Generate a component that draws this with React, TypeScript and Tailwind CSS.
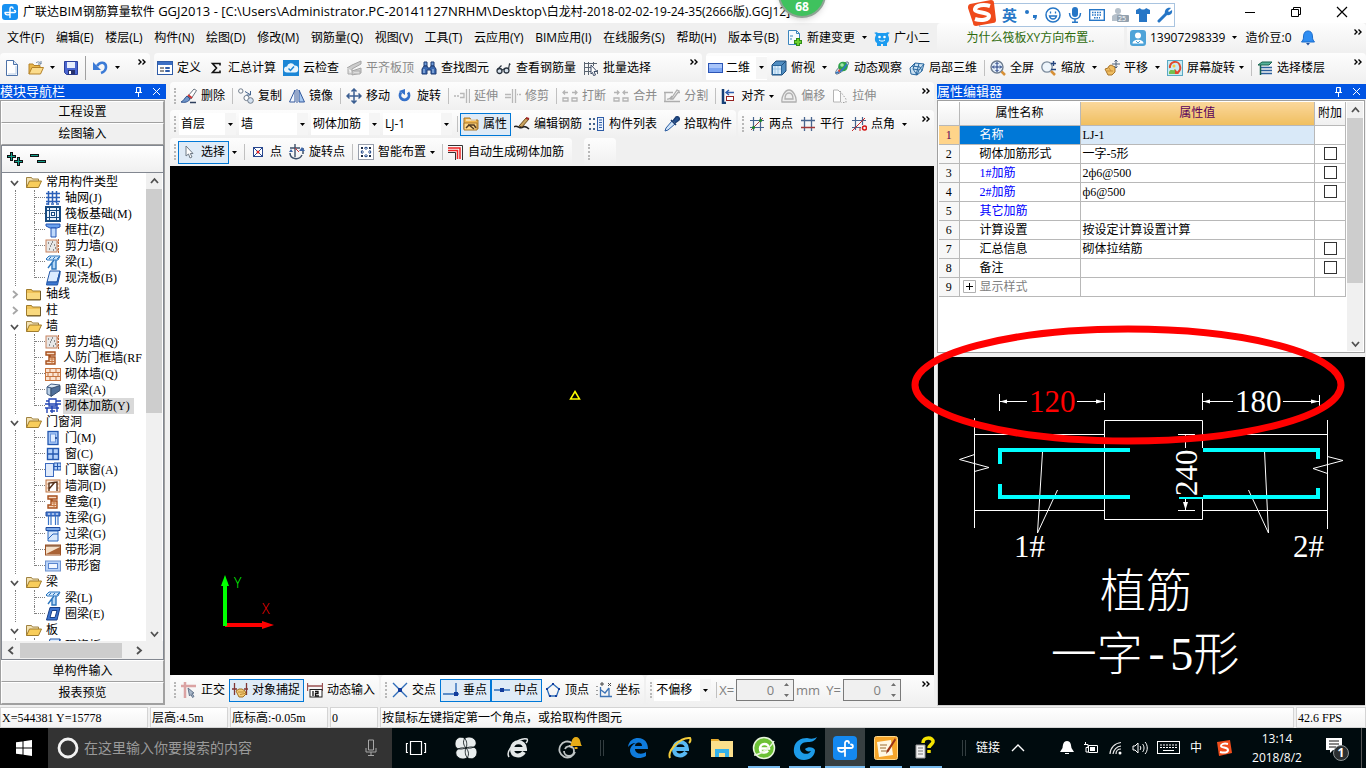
import type { ReactNode } from "react";
import clsx from "clsx";

const art: Record<string, ReactNode> = {
  app: (
    <>
      <rect width="16" height="16" rx="3" fill="#1791f2" />
      <path d="M8 13.5V4.5a1.5 1.5 0 0 1 3 0M3 8.500h9.500c1.500 0 1.500-2 0-2M3 8.500c0 3 5 3 5 1" fill="none" stroke="#fff" strokeWidth="1.4" strokeLinecap="round" />
    </>
  ),
  file: (
    <>
      <path d="M2.5.5h7l4 4v11h-11z" fill="#fff" stroke="#4d72a8" />
      <path d="M9.5.5v4h4" fill="#dbe8f8" stroke="#4d72a8" />
      <path d="M12 6v8H4" fill="none" stroke="#b5cbe6" />
    </>
  ),
  open: (
    <>
      <path d="M1 14V4h4l1 1.500h6V8" fill="#e8b64a" stroke="#b5832a" />
      <path d="M1 14l3-6.500h11.500L12.500 14z" fill="#fbdc8c" stroke="#b5832a" />
      <path d="M8 3c2-2 4-1 5 1m0-3v3h-3" fill="none" stroke="#6c84a0" />
    </>
  ),
  save: (
    <>
      <path d="M1.5 1.500h13v13h-11l-2-2z" fill="#4a66d0" stroke="#2c3f9b" />
      <path d="M4 2h8v6H4z" fill="#e8eefc" />
      <path d="M5 10h7v4.500H5z" fill="#26316e" />
      <path d="M6 11h2v3H6z" fill="#fff" />
    </>
  ),
  undo: (
    <>
      <path d="M5 6c3-5 9-4 9 1 0 3-2 5-5 6" fill="none" stroke="#3c7bd6" strokeWidth="2.6" />
      <path d="M1 2v8h8z" fill="#3c7bd6" />
    </>
  ),
  define: (
    <>
      <rect x=".5" y="1.500" width="15" height="13" fill="#fff" stroke="#2f5ca8" />
      <path d="M1 2h14v3H1z" fill="#3c6fc4" />
      <path d="M3 8h4M3 11h4" stroke="#222" />
      <path d="M8.500 7.500h4v1h-4zM8.500 10.500h4v1h-4z" fill="#fff" stroke="#2f5ca8" />
    </>
  ),
  sigma: <path d="M12 5.500V3.500H4.500L8.500 8l-4 4.500H12v-2" fill="none" stroke="#111" strokeWidth="1.6" />,
  cloud: (
    <>
      <rect width="16" height="16" fill="#1b86d6" />
      <path d="M4 12.500a3 3 0 0 1 0-6 4 4 0 0 1 7.500-1 3.500 3.500 0 0 1 .5 7z" fill="#e9f5fd" />
      <path d="M5.500 8.500l2 2 3.500-4" fill="none" stroke="#1b86d6" strokeWidth="1.500" />
    </>
  ),
  slabTop: (
    <>
      <path d="M1 8l5-3 9-4v3l-9 5v6l9-2V8L6 11" fill="#ccc" stroke="#a4a4a4" />
      <path d="M2 9v5h4M8 11h6v3H8" fill="#ddd" stroke="#aaa" />
    </>
  ),
  find: (
    <>
      <path d="M3 2h3v4H3zM10 2h3v4h-3z" fill="#6d9ad8" stroke="#1d3b72" />
      <path d="M1 14V9l2-3h3l1 2h2l1-2h3l2 3v5h-5v-4H6v4z" fill="#3a68b0" stroke="#1d3b72" />
      <path d="M3 9v4M12 9v4" stroke="#bcd6f6" />
    </>
  ),
  glasses: (
    <>
      <circle cx="3.500" cy="11" r="2.500" fill="#d7e3ee" stroke="#2c3540" strokeWidth="1.3" />
      <circle cx="10.500" cy="10.500" r="2.500" fill="#d7e3ee" stroke="#2c3540" strokeWidth="1.3" />
      <path d="M6 10l2-1M1.500 9.500l4-4M12.500 9l1-5 1 .5" fill="none" stroke="#2c3540" strokeWidth="1.2" />
    </>
  ),
  batch: (
    <>
      <path d="M1.500 2v13M5.500 2v13M1 3.500h13M1 7.500h9M1 11.500h7M10.500 2v4M14.500 10v4" stroke="#5a6470" />
      <path d="M8 5l6 6.500h-3L12.500 15l-2 .5-1-3L8 14z" fill="#fff" stroke="#3c4b66" />
    </>
  ),
  plane: (
    <>
      <rect x=".5" y="3.500" width="14" height="9" fill="#a9c5f9" stroke="#2c55b5" />
      <path d="M1 8h13v4H1z" fill="#7ba4f2" />
    </>
  ),
  cube: (
    <>
      <path d="M1 5l4-4h10v10l-4 4H1z" fill="#4f8cc0" stroke="#1f4d7a" />
      <path d="M1.500 5.500h9v9h-9z" fill="#d9ecfb" stroke="#2a6498" />
      <path d="M4 6v8M7 6v8M2 9h8" stroke="#9cc4e4" />
      <path d="M10.500 5.500L15 1" stroke="#1f4d7a" />
    </>
  ),
  orbit: (
    <>
      <path d="M2 14c-3-2 8-13 12-12 3 2-8 13-12 12z" fill="#d7dfe8" stroke="#5d7186" />
      <circle cx="9" cy="6.500" r="4.800" fill="#2fa34a" />
      <circle cx="8" cy="5" r="1.800" fill="#a5e6a9" />
      <path d="M2 13c4-1 8-4 11-9" fill="none" stroke="#2f78c8" strokeWidth="1.500" />
      <path d="M4 10l3-1-2 4z" fill="#e5482f" />
    </>
  ),
  partial3d: (
    <>
      <path d="M1 8l5-5 9 1-2 7-5 4-6-1z" fill="#cbe1f2" stroke="#2a689f" />
      <path d="M4 9l6 1 5-6M6 3l-2 6 4 6M10 10l-2 5M3 6l8 1 2 4M10 3.500L7 15" fill="none" stroke="#2a689f" />
    </>
  ),
  fullscreen: (
    <>
      <circle cx="7" cy="7" r="6" fill="#e4effa" stroke="#6d7c8f" strokeWidth="1.4" />
      <path d="M7 2.500v9M2.500 7h9M5.500 4L7 2.500 8.500 4M5.500 10L7 11.500 8.500 10M4 5.500L2.500 7 4 8.500M10 5.500L11.500 7 10 8.500" fill="none" stroke="#223f82" />
      <path d="M11.500 11.500L15 15" stroke="#d79036" strokeWidth="2.500" />
    </>
  ),
  zoom: (
    <>
      <circle cx="6" cy="7" r="5.200" fill="#eef5fb" stroke="#7b8a9b" strokeWidth="1.3" />
      <path d="M10 11l4 4" stroke="#d79036" strokeWidth="2.500" />
      <path d="M12.500 1v5M10 3.500h5M10 9.500h5" stroke="#25447e" strokeWidth="1.4" />
    </>
  ),
  pan: (
    <>
      <path d="M1 9l3-1 1-2 2-1 2 1 2 1v5l-3 3H4z" fill="#eebd62" stroke="#a8742a" />
      <path d="M3 11h6M5 8l2 3" stroke="#c88c36" />
      <path d="M12 0v8M8 4h8M10.500 1.500L12 0l1.500 1.500M10.500 6.500L12 8l1.500-1.500" fill="none" stroke="#4b5e78" />
    </>
  ),
  screenRotate: (
    <>
      <rect x=".5" y=".5" width="15" height="15" fill="#c9ebf4" stroke="#5aa9c3" />
      <path d="M3 8a5 5 0 0 1 10-2c1 3 0 5-3 7" fill="none" stroke="#e0492e" strokeWidth="2" />
      <path d="M6 14h6l-4-5z" fill="#e0492e" />
      <path d="M2 12c2-4 4 0 6-3v5H2z" fill="#74bf4d" />
      <circle cx="7" cy="6" r="1.500" fill="#f7c93b" />
    </>
  ),
  floors: (
    <>
      <path d="M1 5l4-3h10l-3 3z" fill="#57b39a" stroke="#17604d" />
      <path d="M4 7.500h11M4 10.500h11M4 13.500h11" stroke="#2c5f9c" strokeWidth="1.4" />
      <path d="M3.500 5v10" stroke="#17604d" strokeWidth="1.500" />
    </>
  ),
  newChange: (
    <>
      <path d="M1.500.5h8l3 3v11h-11z" fill="#f5fbff" stroke="#3b85bd" />
      <path d="M9.500.5v3h3M3 6h3M3 9h2" fill="none" stroke="#3b85bd" />
      <path d="M11 8v8M7 12h8" stroke="#2f8d17" strokeWidth="4" />
      <path d="M11 9v6M8 12h6" stroke="#6cd12f" strokeWidth="2" />
    </>
  ),
  robot: (
    <>
      <path d="M0 3c2-1 3-1 4 0h8c1-1 2-1 4 0-1 0-2 1-2 2 2 4 1 7-1 8v3H9v-2H7v2H3v-3C1 12 0 9 2 5c0-1-1-2-2-2z" fill="#1d9cf0" />
      <circle cx="5.500" cy="7" r="1.300" fill="#fff" />
      <circle cx="10.500" cy="7" r="1.300" fill="#fff" />
      <path d="M5 10c2 1.500 4 1.500 6 0" fill="none" stroke="#fff" />
    </>
  ),
  account: (
    <>
      <rect width="16" height="16" rx="3" fill="#4ea3d8" />
      <circle cx="8" cy="5.500" r="3" fill="#fff" />
      <path d="M2.500 13.500c0-5 11-5 11 0z" fill="#fff" />
      <path d="M6 11l2 2 2-2" fill="none" stroke="#4ea3d8" />
    </>
  ),
  bell: (
    <>
      <path d="M8 1c-3.500 0-4.500 3-4.500 6 0 3-1 3.500-2 5h13c-1-1.500-2-2-2-5 0-3-1-6-4.500-6z" fill="#2f8df2" stroke="#1a6ccc" />
      <path d="M6 13h4L8 15.500z" fill="#1f4f9c" />
    </>
  ),
  erase: (
    <>
      <path d="M0 14c3-1 4-5 6-6l3 3c-1 3-6 4-9 3z" fill="#6f95c9" stroke="#33558f" />
      <path d="M7 8l6-7 2.500 1.500L10 11z" fill="#fff" stroke="#6b7580" />
      <path d="M7 7l4 3" stroke="#c33" strokeWidth="1.800" />
      <path d="M9 14.500h6" stroke="#2d3e5c" strokeWidth="1.500" />
    </>
  ),
  copy: (
    <>
      <circle cx="2.800" cy="3" r="2.200" fill="#fff" stroke="#6f7b8a" />
      <circle cx="8.500" cy="10" r="2.600" fill="#fff" stroke="#6f7b8a" />
      <circle cx="12.500" cy="12.500" r="2.800" fill="#d5e2f0" stroke="#6f7b8a" />
      <path d="M7 3.500l5 3M12.500 3v4h-4" fill="none" stroke="#44648e" />
    </>
  ),
  mirror: (
    <>
      <path d="M6 2v12H.5z" fill="#f3f8ff" stroke="#34599c" />
      <path d="M10 2v12h5.500z" fill="#a6c8f0" stroke="#34599c" />
      <path d="M8 1v14" stroke="#34599c" />
    </>
  ),
  move: <path d="M8 1v14M1 8h14M5.500 3.500L8 1l2.500 2.500M5.500 12.500L8 15l2.500-2.500M3.500 5.500L1 8l2.500 2.500M12.500 5.500L15 8l-2.500 2.500" fill="none" stroke="#3c5f92" strokeWidth="1.500" />,
  rotate: (
    <>
      <path d="M4 4.500a4.500 4.500 0 1 0 7 0" fill="none" stroke="#3470c9" strokeWidth="2.800" />
      <path d="M8 1v6L2 3z" fill="#3470c9" />
    </>
  ),
  extend: <path d="M0 8h2M3 8h2M6 5.500h4v4H6M12.500 1v14M15.500 1v14" fill="none" stroke="#b8b8b8" strokeWidth="1.3" />,
  trim: <path d="M0 6.500h6M7.500 1v14M10.500 1v14M12 6.500h1M14 6.500h2M0 9.500h6" fill="none" stroke="#b8b8b8" strokeWidth="1.3" />,
  breakAt: <path d="M1 4.500h5M10 4.500h5M3 2.500l-2 2 2 2M13 2.500l2 2-2 2M1 10h5v3H1zM10 10h5v3h-5z" fill="none" stroke="#b4b4b4" strokeWidth="1.3" />,
  join: <path d="M1 4.500h5M10 4.500h5M4 2.500l2 2-2 2M12 2.500l-2 2 2 2M1 10h5v3H1zM10 10h5v3h-5z" fill="none" stroke="#b4b4b4" strokeWidth="1.3" />,
  split: <path d="M0 4.500h9M14 4.500h2M0 13.500h16M1 13V5M3 11c3 1 4-2 5-3M7 11l6-9 2 1-6 8z" fill="none" stroke="#adadad" strokeWidth="1.3" />,
  align: (
    <>
      <path d="M2 1v14h3" fill="none" stroke="#153f77" strokeWidth="2.500" />
      <path d="M5 4.500h8M8 2L5 4.500 8 7" fill="none" stroke="#2c5cae" strokeWidth="1.4" />
      <rect x="5.500" y="8.500" width="7" height="4" fill="#fff" stroke="#932020" />
    </>
  ),
  offset: (
    <>
      <path d="M1 14c-1-5 3-12 7-12s8 7 7 12z" fill="#eee" stroke="#b0b0b0" strokeWidth="1.3" />
      <path d="M4 11c0-4 2-6 4-6s4 2 4 6z" fill="none" stroke="#b0b0b0" strokeWidth="1.3" />
    </>
  ),
  stretch: (
    <>
      <path d="M1.500 2v12h7V4.500L6 2z" fill="#fff" stroke="#b4b4b4" />
      <path d="M8 3l6 8v3.500H9" fill="none" stroke="#9f9f9f" strokeDasharray="1.500 1.500" />
    </>
  ),
  property: (
    <>
      <path d="M1 5V2h6l1 2h7v9H1z" fill="#f1b850" stroke="#a7772a" />
      <path d="M1 7h13v7H1z" fill="#ffd887" stroke="#a7772a" />
      <path d="M3 12l3-3 5 4M5 9h6l2 3" fill="none" stroke="#523a21" strokeWidth="1.500" />
      <path d="M3 4h10" stroke="#fff" />
    </>
  ),
  editRebar: (
    <>
      <path d="M0 11c3-3 6 3 9 0 2-1 4 0 6 2" fill="none" stroke="#222" strokeWidth="1.500" />
      <path d="M5 10l7-8 3 1-7 8z" fill="#caa560" stroke="#6d4b1b" />
      <path d="M12 2l3 1" stroke="#a12525" strokeWidth="2" />
    </>
  ),
  list: (
    <>
      <path d="M0 3h2M0 8h2M0 13h2M4 3h2M4 8h2M4 13h2" stroke="#44648e" strokeWidth="1.800" />
      <rect x="8.500" y="1.500" width="6" height="13" fill="#eaf2fc" stroke="#2d5ba6" />
      <path d="M10 4h3M10 6.500h3M10 9h3M10 11.500h3" stroke="#2d5ba6" />
    </>
  ),
  pick: (
    <>
      <path d="M1 15l1-3 6-7 3 3-7 6z" fill="#cfe4fa" stroke="#2a5ca0" />
      <path d="M7 4l5 5M9 5l3-4c2-1 4 1 3 3l-4 3" fill="#24508f" stroke="#1c3e72" strokeWidth="1.500" />
    </>
  ),
  twoPoint: (
    <>
      <path d="M4.500 1v14M11.500 1v14M1 4.500h14M1 11.500h14" stroke="#48658f" strokeWidth="1.2" />
      <path d="M2 14L14 2" stroke="#a13a3a" />
      <circle cx="4.500" cy="11.500" r="1.600" fill="#218a2b" />
      <circle cx="11.500" cy="4.500" r="1.600" fill="#218a2b" />
    </>
  ),
  parallel: (
    <>
      <path d="M4.500 1v14M11.500 1v14M1 4.500h14" stroke="#48658f" strokeWidth="1.3" />
      <path d="M1 11.500h14" stroke="#a13a3a" strokeWidth="1.3" />
    </>
  ),
  pointAngle: (
    <>
      <path d="M4.500 1v13M11.500 1v8M1 4.500h14M1 11.500h9" stroke="#48658f" strokeWidth="1.2" />
      <path d="M1 15L14 2" stroke="#c82a2a" />
      <circle cx="13.500" cy="12" r="2" fill="none" stroke="#d31818" strokeWidth="1.500" />
      <path d="M9 15v-3" stroke="#d31818" />
    </>
  ),
  cursor: <path d="M5 2v10l2.500-2L9 14l2-1-1.700-3.500H12z" fill="#fff" stroke="#6f7a86" />,
  point: (
    <>
      <rect x="3.500" y="3.500" width="9" height="9" fill="#fff" stroke="#27468e" />
      <path d="M4 4l8 8M12 4l-8 8" stroke="#27468e" />
      <circle cx="8" cy="8" r="1.500" fill="#e02222" />
    </>
  ),
  rotatePoint: (
    <>
      <path d="M1 4h10M6 0v13" stroke="#3e5069" strokeWidth="1.4" />
      <path d="M1 9c0 6 9 8 12 2M14 10V4" fill="none" stroke="#3e5069" strokeWidth="1.500" />
      <path d="M10 7h6l-3-4zM0 8h4L2 5z" fill="#3d66a8" />
      <path d="M6 4l4 4" stroke="#ca3434" />
    </>
  ),
  smart: (
    <>
      <rect x=".5" y=".5" width="15" height="15" fill="#fff" stroke="#33415a" strokeDasharray="1 1" />
      <path d="M8 3v3M8 10v3M3 8h3M10 8h3M6 4.500L8 3l2 1.500M6 11.500L8 13l2-1.500M4.500 6L3 8l1.500 2M11.500 6L13 8l-1.500 2" fill="none" stroke="#224a8c" />
      <path d="M3 3h2v2H3zM11 3h2v2h-2zM3 11h2v2H3zM11 11h2v2h-2z" fill="#1c2a42" />
    </>
  ),
  autoRebar: (
    <>
      <path d="M0 1.500h14.500V16M0 8.500h7.500V16" fill="none" stroke="#333" />
      <path d="M0 4h12v11M0 6.500h9.500V15" fill="none" stroke="#e22" strokeWidth="1.500" />
    </>
  ),
  ortho: (
    <>
      <path d="M0 4h15M4 0v16" stroke="#dba3a3" strokeWidth="2.500" />
      <path d="M7 6l6 5-2 .5 2 3-1.500 1L10 12.500 8.500 14z" fill="#a9b7c8" stroke="#64758c" />
    </>
  ),
  snap: (
    <>
      <path d="M2.500 1v12M14.500 1v12M0 7h5M12 7h4" stroke="#803535" strokeWidth="1.3" />
      <path d="M4 9l3-2 3 0 3 2 1 3-3 3H7z" fill="#f3cc78" stroke="#a17125" />
      <path d="M6 10l6 0M8 12.500l5-1" stroke="#be8b35" />
    </>
  ),
  dynInput: (
    <>
      <path d="M0 4h15.500M.5 1v8M15.500 1v8" stroke="#9b5252" strokeWidth="1.3" />
      <rect x="3" y="7.500" width="12" height="7.500" fill="#fff" stroke="#222" />
      <path d="M6 9v5M8 9.500h3v2H8.500V14H12" fill="none" stroke="#111" strokeWidth="1.3" />
    </>
  ),
  cross: (
    <>
      <path d="M1 1l14 14M15 1L1 15" stroke="#2f6db9" strokeWidth="1.4" />
      <path d="M6 6h4v4H6z" fill="#123c9c" />
    </>
  ),
  perp: (
    <>
      <path d="M0 12h16M13 1v12" stroke="#2f6db9" strokeWidth="1.4" />
      <path d="M11 10h4v4h-4z" fill="#123c9c" />
    </>
  ),
  mid: (
    <>
      <path d="M0 8h16" stroke="#2f6db9" strokeWidth="1.4" />
      <path d="M6 6h4v4H6z" fill="#123c9c" />
    </>
  ),
  vertex: (
    <>
      <path d="M8 2l6 5-2.500 7h-7L2 7z" fill="none" stroke="#2f6db9" strokeWidth="1.3" />
      <path d="M7 1h2v2H7zM13 6h2v2h-2zM1 6h2v2H1zM4 13h2v2H4zM10 13h2v2h-2z" fill="#123c9c" />
    </>
  ),
  coord: (
    <>
      <path d="M4.500 5v9.500H16M5 8l4 3 4-5M13 6v8" fill="none" stroke="#3d73b4" strokeWidth="1.3" />
      <path d="M1 4v1M1 8v1M1 12v1M5 1h2v2H5zM12 1l3 3M15 1l-3 3" fill="none" stroke="#444" />
    </>
  ),
  grid: <path d="M3.500 1v14M7.500 1v12M11.500 1v12M1 3.500h14M1 7.500h14M1 11.500h14M1 14h2M6 14h3M11 14h3" fill="none" stroke="#2a5fb8" strokeWidth="1.500" />,
  raft: (
    <>
      <rect x="1" y="1" width="14" height="14" fill="#e9f2fb" stroke="#174a80" strokeWidth="2" />
      <path d="M4.500 1v14M11.500 1v14M1 4.500h14M1 11.500h14" stroke="#174a80" />
      <rect x="6.500" y="6.500" width="3" height="3" fill="#fff" stroke="#174a80" />
    </>
  ),
  column: (
    <>
      <path d="M1 2h14v3l-3 1H5L1 4z" fill="#6aa0ec" stroke="#2355b4" />
      <path d="M6 6h5v9H6z" fill="#bfd9fb" stroke="#2355b4" />
    </>
  ),
  shear: (
    <>
      <rect x="1" y="2" width="11" height="12" fill="#e8e8e8" stroke="#c8825d" />
      <path d="M3 5h1M7 4h1M5 8h1M9 7h1M4 11h1M8 12h1M10 10h1M6 6h1" stroke="#333" />
      <path d="M13.500 1v14M12 4h3M12 8h3M12 12h3" stroke="#b8683c" strokeDasharray="2 1" />
    </>
  ),
  beam: (
    <>
      <path d="M1 5l3-3h11l-2 4H2z" fill="#cfe6fb" stroke="#2b75bd" />
      <path d="M9 6L3 14M11 6v9H7V9" fill="#b5d8f7" stroke="#2b75bd" strokeWidth="1.4" />
      <path d="M4 5l2-2M8 5l2-2M12 5l2-2" stroke="#2b75bd" />
    </>
  ),
  slab: (
    <>
      <path d="M5 1h10l-3 11H2z" fill="#dcecff" stroke="#2458a8" />
      <path d="M2 12h10l3-11v3l-2.500 11H1.500z" fill="#3d78d2" stroke="#2458a8" />
    </>
  ),
  civil: (
    <>
      <path d="M3 2h9v3H7v2h5v7H3v-3h3V5H3z" fill="#f9dcc4" stroke="#a64f1c" strokeWidth="1.4" />
      <path d="M6 9h6M6 11.500h6M9 7v7" stroke="#c5743f" />
    </>
  ),
  brick: (
    <>
      <rect x=".5" y="2.500" width="15" height="12" fill="#fbe4d2" stroke="#c5743f" />
      <path d="M1 6.500h14M1 10.500h14M5 3v3M11 3v3M8 7v3M3 7v3M13 7v3M5 11v3M11 11v3" stroke="#c5743f" />
    </>
  ),
  hidden: (
    <>
      <path d="M2 5l4-3 9 1-4 4z" fill="#dbe8f4" stroke="#425e84" />
      <path d="M2 5l4 1v8l-4-2z" fill="#b9cfe6" stroke="#425e84" />
      <path d="M6 6.500l9-3v5l-9 6z" fill="#4f6f99" stroke="#38506f" />
    </>
  ),
  masonryRebar: (
    <>
      <path d="M4 1h7v7H4z" fill="#fff" stroke="#2345b4" strokeWidth="1.3" />
      <path d="M0 6h16M0 10h14M2 10v5M7 8v7M12 6v8M5 13h5M1 3h3M11 3h5" stroke="#2345b4" strokeWidth="1.4" />
    </>
  ),
  door: (
    <>
      <rect x="3" y="1.500" width="10" height="13" fill="#a9c9f8" stroke="#2458b0" strokeWidth="1.3" />
      <rect x="5.500" y="4" width="5" height="8" fill="#dfecff" stroke="#6c97dd" />
      <path d="M11 7v2" stroke="#173c85" strokeWidth="1.500" />
    </>
  ),
  windowIcon: (
    <>
      <rect x="2.500" y="2.500" width="11" height="11" fill="#b4d2fb" stroke="#2458b0" strokeWidth="1.4" />
      <path d="M8 2v12M2 8h12" stroke="#2458b0" strokeWidth="1.4" />
    </>
  ),
  doorWindow: (
    <>
      <rect x=".5" y="1.500" width="8" height="13" fill="#dfeafb" stroke="#3c6abf" />
      <path d="M9 1h7v7H9zM12.500 1v7M9 4.500h7" fill="#b4d2fb" stroke="#2458b0" />
    </>
  ),
  wallHole: (
    <>
      <rect x="1" y="2" width="14" height="12" fill="#fbe7d6" stroke="#bf7645" />
      <path d="M1 6h14M1 10h14" stroke="#dba27d" />
      <path d="M4 13V5l8-1v9M4 11l6-7" fill="#fff" stroke="#553018" strokeWidth="1.4" />
    </>
  ),
  coupling: (
    <>
      <path d="M1 2h14v4H1z" fill="#4b7fd5" stroke="#1e4a9c" />
      <path d="M3.500 6v9M6 6v9M10.500 6v9M13 6v9" stroke="#3a75c9" strokeWidth="1.2" />
      <path d="M3 4h2M7 4h2M11 4h2" stroke="#fff" />
    </>
  ),
  lintel: (
    <>
      <path d="M1 1.500h14v3H1z" fill="#7ba8e8" stroke="#1e4a9c" />
      <path d="M3 5h10v10H3z" fill="#d8e8fb" stroke="#2b66bd" />
      <path d="M3 13l5-5h5" fill="none" stroke="#2b66bd" />
    </>
  ),
  stripHole: (
    <>
      <rect x=".5" y="3" width="15" height="10" fill="#f5e0c9" stroke="#9a4f21" />
      <path d="M1 12L15 5v7z" fill="#a96235" />
      <path d="M1 4h14" stroke="#693313" />
    </>
  ),
  stripWindow: (
    <>
      <rect x=".5" y="3" width="15" height="10" fill="#b9d3f8" stroke="#6f93cf" />
      <rect x="3.500" y="5.500" width="9" height="5" fill="#f0f6ff" stroke="#5a86cf" />
    </>
  ),
  ringBeam: (
    <>
      <path d="M5 1.500h10L12 14H1.500z" fill="#3b73cf" stroke="#173f87" />
      <path d="M7 4.500h5l-2 7H5z" fill="#fff" stroke="#173f87" />
    </>
  ),
  folder: (
    <>
      <path d="M.5 13.500v-10h5l1 1.500h8v8.500z" fill="#efc259" stroke="#a07c2d" />
      <path d="M1 7h13v6H1z" fill="#f9d97e" />
      <path d="M14.500 5v9H1" fill="none" stroke="#6f5a2a" />
    </>
  ),
  folderOpen: (
    <>
      <path d="M.5 13.500v-10h5l1 1.500h6V8" fill="#f3e2b3" stroke="#a08241" />
      <path d="M.5 13.500l3-6.500h12l-3 6.500z" fill="#f8cd5b" stroke="#a07c2d" />
    </>
  ),
};

function Icon({ name }: { name: string }) {
  return (
    <svg width="16" height="16" viewBox="0 0 16 16" className="shrink-0" aria-hidden="true">
      {art[name]}
    </svg>
  );
}

function Caret() {
  return (
    <svg width="5" height="3" viewBox="0 0 5 3" className="shrink-0" aria-hidden="true">
      <path d="M0 0h5L2.500 3z" fill="#000" />
    </svg>
  );
}

function CaretButton({ label }: { label: string }) {
  return (
    <button aria-label={label} className="mr-1 flex h-5 items-center pl-[3px]">
      <Caret />
    </button>
  );
}

function More() {
  return (
    <button aria-label="更多" className="mt-[6px] mr-1 ml-auto self-start">
      <svg width="8" height="6" viewBox="0 0 8 6" aria-hidden="true">
        <path d="M.5.5L3 3 .5 5.500M4.500.5L7 3 4.500 5.500" fill="none" stroke="#000" strokeWidth="1.4" />
      </svg>
    </button>
  );
}

function Grip() {
  return <span className="mr-[2px] ml-1 h-4 shrink-0 border-l-2 border-dotted border-[#b8b8b8]" />;
}

function Sep() {
  return <span className="mr-[2px] ml-[3px] h-4 w-px shrink-0 bg-[#c0c0c0]" />;
}

type ToolProps = { icon: string; label: string; active?: boolean; disabled?: boolean; caret?: boolean };

function Tool({ icon, label, active, disabled, caret }: ToolProps) {
  return (
    <button
      disabled={disabled}
      className={clsx(
        "flex h-[23px] shrink-0 items-center gap-1 border pr-[3px] pl-[2px] whitespace-nowrap",
        active ? "border-[#0078d7] bg-[#dfebf7]" : "border-transparent",
        disabled && "text-[#8a8a8a]",
      )}
    >
      <Icon name={icon} />
      {label}
      {caret && <Caret />}
    </button>
  );
}

function Bar({ children, className }: { children: ReactNode; className?: string }) {
  return (
    <div className={clsx("flex min-w-0 items-center overflow-hidden rounded-sm bg-gradient-to-b from-[#fdfdfd] to-[#f0f0f0]", className)}>
      {children}
    </div>
  );
}

function Combo({ label, value, className }: { label: string; value: string; className: string }) {
  return (
    <span className={clsx("relative flex h-[22px] shrink-0 items-center bg-white", className)}>
      <select aria-label={label} className="h-full w-full appearance-none pl-[2px] outline-none">
        <option>{value}</option>
      </select>
      <span className="pointer-events-none absolute inset-y-0 right-0 flex w-[11px] items-center justify-center bg-[#f5f5f5]">
        <Caret />
      </span>
    </span>
  );
}

const menus = [
  "文件(F)", "编辑(E)", "楼层(L)", "构件(N)", "绘图(D)", "修改(M)", "钢筋量(Q)",
  "视图(V)", "工具(T)", "云应用(Y)", "BIM应用(I)", "在线服务(S)", "帮助(H)", "版本号(B)",
];

function TitleBar() {
  return (
    <header className="relative flex h-[23px] shrink-0 items-center bg-white pl-[2px]">
      <Icon name="app" />
      <h1 className="ml-[5px] text-[13px] whitespace-nowrap">
        <span className="text-[12px]">广联达</span>BIM<span className="text-[12px]">钢筋算量软件</span>
        {" GGJ2013 - [C:\\Users\\Administrator.PC-20141127NRHM\\Desktop\\"}
        <span className="text-[12px]">白龙村-2018-02-02-19-24-35(2666版).GGJ12]</span>
      </h1>
      <div className="absolute top-[-30px] left-[778px] flex h-12 w-12 items-end justify-center rounded-full border-2 border-[#8fa495] bg-[#3fc25e] pb-[1px] text-[12px] font-bold text-white shadow-md">
        68
      </div>
      <div className="mr-[18px] ml-auto flex items-center gap-[34px]">
        <button aria-label="最小化">
          <svg width="12" height="12" viewBox="0 0 12 12"><path d="M1 6.500h10" stroke="#000" /></svg>
        </button>
        <button aria-label="还原">
          <svg width="12" height="12" viewBox="0 0 12 12"><path d="M1.500 3.500h7v7h-7zM3.500 3v-1.500h7v7H9" fill="none" stroke="#000" /></svg>
        </button>
        <button aria-label="关闭">
          <svg width="12" height="12" viewBox="0 0 12 12"><path d="M1 1l10 10M11 1L1 11" stroke="#000" strokeWidth="1.2" /></svg>
        </button>
      </div>
      <ImeBar />
    </header>
  );
}

function ImeBar() {
  return (
    <div className="absolute top-[3px] right-[191px] z-20 flex h-6 w-[196px] items-center gap-[6px] border border-[#a9c4e0] bg-white pl-[22px] text-[#2676c6]">
      <svg width="29" height="29" viewBox="0 0 29 29" className="absolute -top-[5px] -left-[12px]">
        <path d="M2 5L23 1c2 0 3 1 3 3l2 17c0 2-1 3-3 3L8 27c-2 0-3-1-3-3L0 9c0-2 0-3 2-4z" fill="#ef4a1b" />
        <path d="M22 7c-6-2-14-1-15 3s14 3 14 7-8 5-14 3" fill="none" stroke="#fff" strokeWidth="4" />
      </svg>
      <span className="text-[15px] font-bold">英</span>
      <svg width="16" height="16" viewBox="0 0 16 16"><circle cx="4" cy="5" r="2" fill="#2676c6" /><path d="M10 8h4c0 3-1 5-3 5l1-2h-2z" fill="#2676c6" /></svg>
      <svg width="16" height="16" viewBox="0 0 16 16"><circle cx="8" cy="8" r="7" fill="none" stroke="#2676c6" strokeWidth="1.500" /><path d="M5.500 4.500v2M10.500 4.500v2M4.500 9c1 4 6 4 7 0z" fill="none" stroke="#2676c6" strokeWidth="1.3" /></svg>
      <svg width="16" height="16" viewBox="0 0 16 16"><rect x="5" y="0" width="6" height="10" rx="3" fill="#2676c6" /><path d="M2.500 6c0 8 11 8 11 0M8 12v3M5 15.300h6" fill="none" stroke="#2676c6" strokeWidth="1.500" /></svg>
      <svg width="16" height="16" viewBox="0 0 16 16"><rect x=".7" y="2.700" width="14.600" height="10.600" fill="none" stroke="#2676c6" strokeWidth="1.4" /><path d="M3 5.500h10M3 8h10M5 10.800h6" stroke="#2676c6" strokeWidth="1.4" strokeDasharray="1.500 1" /></svg>
      <svg width="18" height="16" viewBox="0 0 18 16"><circle cx="7" cy="4" r="3" fill="#b5c0ca" /><path d="M1 14V9c3-3 9-3 11 0v5z" fill="#b5c0ca" /><rect x="6" y="8" width="12" height="7" rx="1" fill="#93a1ae" /><text x="7" y="14" fontSize="7" fill="#fff">25</text></svg>
      <svg width="16" height="16" viewBox="0 0 16 16"><path d="M1 3l4-2c1 2 5 2 6 0l4 2v4h-3v8H4V7H1z" fill="#2676c6" /></svg>
      <svg width="16" height="16" viewBox="0 0 16 16"><path d="M2 14L9 7" stroke="#2676c6" strokeWidth="3" strokeLinecap="round" /><path d="M8 7c-1-4 2-7 6-6l-3 3 1 1 3-2c1 4-3 7-7 4z" fill="#2676c6" /></svg>
    </div>
  );
}

function MenuRow() {
  return (
    <div className="flex h-[29px] shrink-0 items-center">
      <nav className="flex min-w-0 flex-1 items-center overflow-hidden pl-[7px] whitespace-nowrap">
        <div className="mr-[5px] flex w-[772px] shrink-0 justify-between">
          {menus.map((m) => (
            <button key={m}>{m}</button>
          ))}
        </div>
        <Tool icon="newChange" label="新建变更" />
        <CaretButton label="新建变更选项" />
        <Tool icon="robot" label="广小二" />
      </nav>
      <div className="flex h-full w-[429px] shrink-0 gap-[3px]">
        <Bar className="w-[187px] justify-center">
          <a href="#help" className="text-[#2e6b0c]">为什么筏板XY方向布置..</a>
        </Bar>
        <Bar className="flex-1">
          <Tool icon="account" label="13907298339" />
          <CaretButton label="账号" />
          <span className="mr-2 ml-1">造价豆:0</span>
          <button aria-label="通知"><Icon name="bell" /></button>
          <More />
        </Bar>
      </div>
    </div>
  );
}

function MainToolbar() {
  return (
    <div className="flex h-[30px] shrink-0 gap-1 pt-px">
      <Bar className="w-[150px] shrink-0 pl-1">
        <button aria-label="新建"><Icon name="file" /></button>
        <button aria-label="打开" className="ml-2"><Icon name="open" /></button>
        <span className="mr-1 ml-[3px]"><CaretButton label="打开选项" /></span>
        <button aria-label="保存"><Icon name="save" /></button>
        <span className="mx-[6px] h-6 w-px bg-[#a0a0a0]" />
        <button aria-label="撤销"><Icon name="undo" /></button>
        <span className="ml-1"><CaretButton label="撤销选项" /></span>
        <More />
      </Bar>
      <Bar className="w-[548px] shrink-0">
        <Tool icon="define" label="定义" />
        <Tool icon="sigma" label="汇总计算" />
        <Tool icon="cloud" label="云检查" />
        <Tool icon="slabTop" label="平齐板顶" disabled />
        <Tool icon="find" label="查找图元" />
        <Tool icon="glasses" label="查看钢筋量" />
        <Tool icon="batch" label="批量选择" />
        <More />
      </Bar>
      <Bar className="flex-1">
        <span className="mr-px flex h-6 items-center bg-white pl-[2px]">
          <Icon name="plane" />
          <Combo label="视图维度" value="二维" className="w-[43px]" />
        </span>
        <Tool icon="cube" label="俯视" />
        <CaretButton label="俯视选项" />
        <Tool icon="orbit" label="动态观察" />
        <Tool icon="partial3d" label="局部三维" />
        <Sep />
        <Tool icon="fullscreen" label="全屏" />
        <Tool icon="zoom" label="缩放" />
        <CaretButton label="缩放选项" />
        <Tool icon="pan" label="平移" />
        <CaretButton label="平移选项" />
        <Tool icon="screenRotate" label="屏幕旋转" caret />
        <Sep />
        <Tool icon="floors" label="选择楼层" />
        <More />
      </Bar>
    </div>
  );
}

function PanelTitle({ children }: { children: string }) {
  return (
    <div className="flex h-[15px] shrink-0 items-center bg-[#0054e3] text-[13px] leading-[15px] text-white">
      <h2>{children}</h2>
      <button aria-label="固定" className="ml-auto">
        <svg width="9" height="10" viewBox="0 0 9 10"><path d="M2.500.5h4v5h-4zM1 5.500h7M4.500 6v4M6 1v4" fill="none" stroke="#fff" /></svg>
      </button>
      <button aria-label="关闭面板" className="mx-[5px] pl-1">
        <svg width="9" height="9" viewBox="0 0 9 9"><path d="M1 1l7 7M8 1L1 8" stroke="#fff" /></svg>
      </button>
    </div>
  );
}

type Group = { name: string; open: boolean; items: [string, string][] };

const tree: Group[] = [
  {
    name: "常用构件类型",
    open: true,
    items: [["grid", "轴网(J)"], ["raft", "筏板基础(M)"], ["column", "框柱(Z)"], ["shear", "剪力墙(Q)"], ["beam", "梁(L)"], ["slab", "现浇板(B)"]],
  },
  { name: "轴线", open: false, items: [] },
  { name: "柱", open: false, items: [] },
  {
    name: "墙",
    open: true,
    items: [["shear", "剪力墙(Q)"], ["civil", "人防门框墙(RF"], ["brick", "砌体墙(Q)"], ["hidden", "暗梁(A)"], ["masonryRebar", "砌体加筋(Y)"]],
  },
  {
    name: "门窗洞",
    open: true,
    items: [
      ["door", "门(M)"], ["windowIcon", "窗(C)"], ["doorWindow", "门联窗(A)"], ["wallHole", "墙洞(D)"], ["civil", "壁龛(I)"],
      ["coupling", "连梁(G)"], ["lintel", "过梁(G)"], ["stripHole", "带形洞"], ["stripWindow", "带形窗"],
    ],
  },
  { name: "梁", open: true, items: [["beam", "梁(L)"], ["ringBeam", "圈梁(E)"]] },
  { name: "板", open: true, items: [["slab", "现浇板(B)"]] },
];

function Arrow({ dir, muted }: { dir: "up" | "down" | "left" | "right"; muted?: boolean }) {
  const d = { up: "M1 6l3.500-4L8 6", down: "M1 3l3.500 4L8 3", left: "M6 1L2 4.500 6 8", right: "M3 1l4 3.500L3 8" }[dir];
  return (
    <svg width="9" height="9" viewBox="0 0 9 9" className="shrink-0" aria-hidden="true">
      <path d={d} fill="none" stroke={muted ? "#a6a6a6" : "#505050"} strokeWidth="1.800" />
    </svg>
  );
}

function VScroll({ thumb }: { thumb: string }) {
  return (
    <div className="flex w-4 shrink-0 flex-col items-center bg-[#f0f0f0]">
      <button aria-label="向上滚动" className="flex h-4 shrink-0 items-center"><Arrow dir="up" /></button>
      <div className="w-full flex-1">
        <div className={clsx("bg-[#cdcdcd]", thumb)} />
      </div>
      <button aria-label="向下滚动" className="flex h-4 shrink-0 items-center"><Arrow dir="down" /></button>
    </div>
  );
}

function ComponentTree() {
  return (
    <ul className="min-w-0 flex-1 overflow-hidden pt-px leading-4 whitespace-nowrap">
      {tree.map((g) => (
        <li key={g.name}>
          <button className="flex h-4 items-center">
            <span className="flex w-6 justify-center"><Arrow dir={g.open ? "down" : "right"} muted={!g.open} /></span>
            <Icon name={g.open ? "folderOpen" : "folder"} />
            <span className="pl-1">{g.name}</span>
          </button>
          {g.open && (
            <ul className="ml-[13px] border-l border-dotted border-[#808080] pl-[18px]">
              {g.items.map(([icon, label], i) => (
                <li key={label} className="flex h-4">
                  <span className={clsx("border-l border-dotted border-[#808080]", i === g.items.length - 1 ? "h-2" : "h-4")} />
                  <span className="h-2 w-[10px] border-b border-dotted border-[#808080]" />
                  <button className="flex items-center gap-[2px]">
                    <Icon name={icon} />
                    <span className={clsx("pr-1 pl-[2px]", label === "砌体加筋(Y)" && "bg-[#d9d9d9]")}>{label}</span>
                  </button>
                </li>
              ))}
            </ul>
          )}
        </li>
      ))}
    </ul>
  );
}

function NavButton({ children }: { children: string }) {
  return (
    <button className="h-[22px] shrink-0 border border-t-white border-r-[#a0a0a0] border-b-[#a0a0a0] border-l-white bg-[#f0f0f0]">
      {children}
    </button>
  );
}

function Navigator() {
  return (
    <aside className="flex w-[166px] shrink-0 flex-col pt-[2px] font-['Liberation_Serif','Noto_Sans_CJK_SC',serif]">
      <PanelTitle>模块导航栏</PanelTitle>
      <div className="mt-px mr-px mb-[2px] flex min-h-0 flex-1 flex-col border border-[#a0a0a0]">
        <NavButton>工程设置</NavButton>
        <NavButton>绘图输入</NavButton>
        <div className="flex min-h-0 flex-1 flex-col border border-[#828790] bg-white">
          <div className="flex h-[27px] shrink-0 items-center gap-[6px] border-b border-[#828790] bg-gradient-to-b from-white to-[#f0f0f0] pl-[5px]">
            <button aria-label="全部展开">
              <svg width="17" height="16" viewBox="0 0 17 16"><path d="M4.500 1v9M0 5.500h9M11.500 6v9M7 10.500h9" stroke="#111" strokeWidth="3" /><path d="M4.500 2v7M1 5.500h7M11.500 7v7M8 10.500h7" stroke="#12a08c" /></svg>
            </button>
            <button aria-label="全部折叠">
              <svg width="17" height="16" viewBox="0 0 17 16"><path d="M0 4.500h9M7 10.500h9" stroke="#111" strokeWidth="3" /><path d="M1 4.500h7M8 10.500h7" stroke="#12a08c" /></svg>
            </button>
          </div>
          <div className="flex min-h-0 flex-1 pr-px">
            <ComponentTree />
            <VScroll thumb="h-[224px]" />
          </div>
          <div className="flex h-[18px] shrink-0 items-center bg-[#f0f0f0] pr-4">
            <button aria-label="向左滚动" className="flex w-[18px] justify-center"><Arrow dir="left" /></button>
            <div className="flex h-[15px] flex-1"><div className="w-[102px] bg-[#cdcdcd]" /></div>
            <button aria-label="向右滚动" className="flex w-[18px] justify-center"><Arrow dir="right" /></button>
          </div>
        </div>
        <NavButton>单构件输入</NavButton>
        <NavButton>报表预览</NavButton>
      </div>
    </aside>
  );
}

function OffsetField({ id, label }: { id: string; label: string }) {
  return (
    <>
      <label htmlFor={id} className="text-[13px] text-[#808080]">{label}</label>
      <span className="ml-[2px] flex h-[22px] w-[58px] shrink-0 items-center border border-[#7a7a7a] bg-[#f0f0f0] pr-[3px] text-[#808080]">
        <input id={id} defaultValue="0" className="w-0 flex-1 pr-[9px] text-right text-[13px] outline-none" />
        <svg width="7" height="18" viewBox="0 0 7 18"><path d="M1 5h5L3.500 2zM1 13h5l-2.500 3z" fill="#707070" /></svg>
      </span>
    </>
  );
}

function Workspace() {
  return (
    <main className="flex min-w-0 flex-1 flex-col">
      <Bar className="h-7 shrink-0">
        <Grip />
        <Tool icon="erase" label="删除" />
        <Sep />
        <Tool icon="copy" label="复制" />
        <Tool icon="mirror" label="镜像" />
        <Sep />
        <Tool icon="move" label="移动" />
        <Tool icon="rotate" label="旋转" />
        <Sep />
        <Tool icon="extend" label="延伸" disabled />
        <Tool icon="trim" label="修剪" disabled />
        <Sep />
        <Tool icon="breakAt" label="打断" disabled />
        <Tool icon="join" label="合并" disabled />
        <Tool icon="split" label="分割" disabled />
        <Sep />
        <Tool icon="align" label="对齐" caret />
        <Tool icon="offset" label="偏移" disabled />
        <Tool icon="stretch" label="拉伸" disabled />
        <More />
      </Bar>
      <div className="flex h-7 shrink-0 gap-[2px]">
        <Bar>
          <Grip />
          <span className="flex items-center gap-[3px] pr-[2px] pl-px">
            <Combo label="楼层" value="首层" className="w-[57px]" />
            <Combo label="构件类别" value="墙" className="w-[69px]" />
            <Combo label="构件类型" value="砌体加筋" className="w-[69px]" />
            <Combo label="构件" value="LJ-1" className="w-[69px]" />
          </span>
          <Sep />
          <Tool icon="property" label="属性" active />
          <Tool icon="editRebar" label="编辑钢筋" />
          <Tool icon="list" label="构件列表" />
          <Tool icon="pick" label="拾取构件" />
        </Bar>
        <Bar className="flex-1">
          <Grip />
          <Tool icon="twoPoint" label="两点" />
          <Tool icon="parallel" label="平行" />
          <Tool icon="pointAngle" label="点角" />
          <CaretButton label="点角选项" />
          <More />
        </Bar>
      </div>
      <div className="flex h-7 shrink-0">
        <Bar className="pr-1">
          <Grip />
          <Tool icon="cursor" label="选择" active />
          <CaretButton label="选择选项" />
          <Sep />
          <Tool icon="point" label="点" />
          <Tool icon="rotatePoint" label="旋转点" />
          <Sep />
          <Tool icon="smart" label="智能布置" caret />
          <Sep />
          <Tool icon="autoRebar" label="自动生成砌体加筋" />
        </Bar>
        <Bar className="ml-3 w-8"><Grip /></Bar>
      </div>
      <div className="relative min-h-0 flex-1 bg-black">
        <svg width="12" height="11" viewBox="0 0 12 11" className="absolute top-[44%] left-[53%] -translate-x-1/2">
          <path d="M6 1.500L10.500 9h-9z" fill="none" stroke="#ff0" strokeWidth="1.500" />
        </svg>
        <svg width="64" height="62" viewBox="0 0 64 62" className="absolute bottom-[43px] left-[45px] font-['Open_Sans',sans-serif] font-light">
          <path d="M10 55h42" stroke="#f00" strokeWidth="4" />
          <path d="M47 51l12 4-12 4z" fill="#f00" />
          <path d="M10 56V14" stroke="#0f0" strokeWidth="4" />
          <path d="M6 16l4-11 4 11z" fill="#0f0" />
          <text x="19" y="18" fontSize="14" fill="#0f0">Y</text>
          <text x="47" y="44" fontSize="14" fill="#f00">X</text>
        </svg>
      </div>
      <div className="mb-[2px] flex h-[30px] shrink-0 gap-[2px]">
        <Bar>
          <Grip />
          <Tool icon="ortho" label="正交" />
          <Tool icon="snap" label="对象捕捉" active />
          <Tool icon="dynInput" label="动态输入" />
        </Bar>
        <Bar>
          <Grip />
          <Tool icon="cross" label="交点" />
          <Tool icon="perp" label="垂点" active />
          <Tool icon="mid" label="中点" active />
          <Tool icon="vertex" label="顶点" />
          <Tool icon="coord" label="坐标" />
        </Bar>
        <Bar className="flex-1">
          <Grip />
          <Combo label="偏移方式" value="不偏移" className="w-[57px]" />
          <span className="w-[2px]" />
          <Sep />
          <OffsetField id="offset-x" label="X=" />
          <span className="mx-[2px] text-[13px] text-[#808080]">mm</span>
          <span className="w-1" />
          <OffsetField id="offset-y" label="Y=" />
          <More />
        </Bar>
      </div>
    </main>
  );
}

type Prop = { name: string; value: string; extra?: boolean; tone?: string };

const props: Prop[] = [
  { name: "名称", value: "LJ-1" },
  { name: "砌体加筋形式", value: "一字-5形", extra: true },
  { name: "1#加筋", value: "2ф6@500", extra: true, tone: "text-[#0000ff]" },
  { name: "2#加筋", value: "ф6@500", extra: true, tone: "text-[#0000ff]" },
  { name: "其它加筋", value: "", tone: "text-[#0000ff]" },
  { name: "计算设置", value: "按设定计算设置计算" },
  { name: "汇总信息", value: "砌体拉结筋", extra: true },
  { name: "备注", value: "", extra: true },
  { name: "显示样式", value: "", tone: "text-[#808080]" },
];

function PropertyTable() {
  return (
    <table className="w-full table-fixed border-collapse self-start">
      <colgroup>
        <col className="w-5" />
        <col className="w-[121px]" />
        <col />
        <col className="w-[31px]" />
      </colgroup>
      <thead>
        <tr className="h-[23px] bg-gradient-to-b from-white to-[#f0f0f0]">
          <th className="border-r border-b border-[#b8b8b8]" />
          <th className="border-r border-b border-[#b8b8b8] font-normal">属性名称</th>
          <th className="border-r border-b border-[#b8b8b8] bg-gradient-to-b from-[#fad79b] to-[#f0bf5e] font-normal text-[#5a005a]">属性值</th>
          <th className="border-r border-b border-[#b8b8b8] font-normal whitespace-nowrap">附加</th>
        </tr>
      </thead>
      <tbody>
        {props.map((p, i) => (
          <tr key={p.name} className="h-[19px]">
            <th className={clsx("border-r border-b border-[#b8b8b8] p-0 font-normal", i === 0 ? "bg-[#ffd48a] text-[#5a005a]" : "bg-[#f7f7f7]")}>{i + 1}</th>
            <td className={clsx("relative border-r border-b border-[#b8b8b8] p-0 pl-5", p.tone, i === 0 && "bg-[#0078d7] text-white")}>
              {p.name === "显示样式" && (
                <button aria-label="展开显示样式" className="absolute top-[2px] left-[3px] bg-white">
                  <svg width="13" height="13" viewBox="0 0 13 13"><path d="M.5.5h12v12H.5z" fill="none" stroke="#b0b0b0" /><path d="M3 6.500h7M6.500 3v7" stroke="#000" /></svg>
                </button>
              )}
              {p.name}
            </td>
            <td className={clsx("border-r border-b border-[#b8b8b8] p-0 pl-[2px]", i === 0 && "bg-[#d9e9f8]")}>{p.value}</td>
            <td className="border-r border-b border-[#b8b8b8] p-0">
              {p.extra && (
                <input type="checkbox" aria-label={p.name + "附加"} className="mx-auto block h-[13px] w-[13px] appearance-none border border-[#333] bg-white" />
              )}
            </td>
          </tr>
        ))}
      </tbody>
    </table>
  );
}

function SectionDrawing() {
  return (
    <svg width="426" height="348" viewBox="0 0 426 348" className="font-['Liberation_Serif','Noto_Sans_CJK_SC',serif] font-light" fill="#fff">
      <g fill="none" stroke="#fff">
        <path d="M61.500 37v17M166.500 36v17M61.500 44.500H89M139 44.500h27.500M264.500 36v17M381.500 38v17M264.500 44.500H295M345 44.500h36.500" />
        <path d="M264.500 91V63.500h-98v99h98V142" />
        <path d="M36.500 77.500h130M36.500 153.500h130M264.500 77.500h125M264.500 153.500h125M36.500 61v110M389.500 63v109" />
        <path d="M36.500 97.500l-15 5 29.500 8-14.500 4M389.500 99.500l15.500 4-30 8 14.500 5" />
        <path d="M104.500 95l-5 81 20-43M326.500 94l4 82-20-43" />
        <path d="M240 77.500h17M247.500 77.500V91M240 153.500h17M247.500 141v12" />
      </g>
      <path d="M62 44.500l7-2v4zM166 44.500l-8-2v4zM265 44.500l7-2v4zM381 44.500l-8-2v4zM247.500 153l-2.500-8h5zM247.500 78l-2.500 6h5z" />
      <g fill="none" stroke="#0ff" strokeWidth="4">
        <path d="M192 93H62v14M192 140H62v-13M265 93h115v9M265 140h115v-9" />
        <path d="M241 141h25" strokeWidth="2" />
      </g>
      <text x="91" y="55" fontSize="31" fill="#f00">120</text>
      <text x="297" y="55" fontSize="31">180</text>
      <text x="0" y="0" fontSize="31" transform="translate(259 139) rotate(-90)">240</text>
      <text x="76" y="200" fontSize="31">1#</text>
      <text x="355" y="200" fontSize="31">2#</text>
      <text x="162" y="250" fontSize="46">植筋</text>
      <text x="207" y="313" fontSize="46" textAnchor="middle">
        一字<tspan className="font-['Liberation_Mono',monospace]">-</tspan>5形
      </text>
    </svg>
  );
}

function PropertyEditor() {
  return (
    <aside className="flex w-[429px] shrink-0 flex-col pt-[2px] font-['Liberation_Serif','Noto_Sans_CJK_SC',serif]">
      <PanelTitle>属性编辑器</PanelTitle>
      <div className="mt-px mr-px flex h-[253px] shrink-0 border border-[#a0a0a0] bg-white p-px">
        <div className="min-w-0 flex-1">
          <PropertyTable />
        </div>
        <span className="w-px" />
        <VScroll thumb="h-[165px]" />
      </div>
      <div className="relative mt-1 mr-px mb-px min-h-0 flex-1 border-b border-l border-[#d0d0d0] bg-black">
        <SectionDrawing />
        <svg width="434" height="120" viewBox="0 0 434 120" className="pointer-events-none absolute -top-8 -left-[27px] z-10">
          <ellipse cx="217" cy="60" rx="213" ry="56" fill="none" stroke="#f00" strokeWidth="7" />
        </svg>
      </div>
    </aside>
  );
}

function StatusBar() {
  const cell = "shrink-0 overflow-hidden border border-[#d4d4d4] bg-gradient-to-b from-white to-[#f3f3f3] pl-px";
  return (
    <footer className="flex h-[21px] shrink-0 gap-[2px] font-['Liberation_Serif','Noto_Sans_CJK_SC',serif] leading-[20px] whitespace-nowrap">
      <span className={clsx(cell, "w-[148px]")}>X=544381 Y=15778</span>
      <span className={clsx(cell, "w-[78px]")}>层高:4.5m</span>
      <span className={clsx(cell, "w-[98px]")}>底标高:-0.05m</span>
      <span className={clsx(cell, "w-[48px]")}>0</span>
      <span className={clsx(cell, "flex-1")}>按鼠标左键指定第一个角点，或拾取构件图元</span>
      <span className={clsx(cell, "w-[70px]")}>42.6 FPS</span>
    </footer>
  );
}

type Task = { label: string; width: string; open?: boolean; current?: boolean; icon: ReactNode };

const pinned: Task[] = [
  {
    label: "任务视图",
    width: "w-12",
    icon: <path d="M6.500 5.500h11v13h-11zM4 7.500H2.500v9H4M20 7.500h1.500v9H20" fill="none" stroke="#fff" strokeWidth="1.2" />,
  },
  {
    label: "风扇",
    width: "w-[52px]",
    icon: (
      <path d="M11.500 11.500C8 7 9 1 15 1s9 6 6 9c-2 2-6 3-9.500 1.500zM12.500 11.500C8 14 1 14 1 8s5-8 9-6c3 2 3 6 2.500 9.500zM12.500 12.500C16 17 15 23 9 23s-9-6-6-9c2-2 6-3 9.500-1.500zM11.500 12.500C16 10 23 10 23 16s-5 8-9 6c-3-2-3-6-2.500-9.500z" fill="#e9eeee" stroke="#000a0d" strokeWidth=".8" />
    ),
  },
  {
    label: "浏览器",
    width: "w-[52px]",
    icon: (
      <>
        <path d="M6 13h13c0-9-13-9-13 0 0 8 9 8 12 3" fill="none" stroke="#e4e8e8" strokeWidth="4" />
        <path d="M3 21C-1 15 12 1 21 3c1 1 0 3-1 4" fill="none" stroke="#e4e8e8" strokeWidth="1.500" />
      </>
    ),
  },
  {
    label: "提醒",
    width: "w-[52px]",
    icon: (
      <>
        <path d="M14 7a8 8 0 1 0 3 9M6 15a5 5 0 1 0 5-5M14 12a4 4 0 0 0-7 1" fill="none" stroke="#bfc5c5" strokeWidth="1.800" />
        <path d="M12 10c2-2 1-9 6-9s4 7 6 9zM16.500 11h3v2h-3z" fill="#e6ac16" />
      </>
    ),
  },
];

const running: Task[] = [
  {
    label: "Edge",
    width: "w-[42px]",
    icon: <path d="M2 11C3 4 8 2 12 2c7 0 10 5 10 11H9c0 5 7 6 11 3v4c-7 4-15 2-16-5 0-4 3-7 6-8-4 0-6 2-8 4zM9 10h7c0-5-7-4-7 0z" fill="#0f7bdc" />,
  },
  {
    label: "Internet Explorer",
    width: "w-[42px]",
    icon: (
      <>
        <path d="M6 13h13c0-9-13-9-13 0 0 8 9 8 12 3" fill="none" stroke="#58b9f3" strokeWidth="4" />
        <path d="M2 22C-1 15 12 1 22 2c1 2 0 4-1 5" fill="none" stroke="#f3cc3b" strokeWidth="2" />
      </>
    ),
  },
  {
    label: "文件资源管理器",
    width: "w-[42px]",
    icon: (
      <>
        <path d="M1 3h7l2 2h13v16H1z" fill="#fbdf8b" />
        <path d="M1 3h7l1 2H1z" fill="#e8ab2d" />
        <path d="M5 21v-8h14v8h-4v-4H9v4z" fill="#35b2ea" />
      </>
    ),
  },
  {
    label: "360浏览器",
    width: "w-[42px]",
    open: true,
    icon: (
      <>
        <circle cx="12" cy="12" r="10.500" fill="#6cc135" stroke="#e8f5dc" strokeWidth="1.500" />
        <path d="M8 12.500h9c0-6-9-6-9 0 0 5 6 5 8 2" fill="none" stroke="#fff" strokeWidth="2.500" />
        <path d="M2 19C6 19 18 13 22 5" fill="none" stroke="#e8f5dc" strokeWidth="1.500" />
      </>
    ),
  },
  {
    label: "广联达G+",
    width: "w-10",
    open: true,
    icon: <path d="M24 1c-2 4-5 5-9 5C9 6 7 9 7 12c0 6 8 8 11 3-3 1-5 0-6-2 3-3 9-2 10 1 0 6-5 10-11 10C3 24 0 18 1 12 2 5 8 2 14 2c4 1 7 1 10-1z" fill="#1d9be8" />,
  },
  {
    label: "广联达钢筋算量",
    width: "w-10",
    open: true,
    current: true,
    icon: (
      <>
        <rect width="24" height="24" rx="4" fill="#1488f0" />
        <path d="M12 20V7a2 2 0 0 1 4 0M5 12h13c2.500 0 2.500-3.500 0-3.500M5 12c0 5 7 5 7 1" fill="none" stroke="#fff" strokeWidth="1.800" strokeLinecap="round" />
      </>
    ),
  },
  {
    label: "记事",
    width: "w-[42px]",
    open: true,
    icon: (
      <>
        <rect x=".5" y=".5" width="23" height="23" rx="2" fill="#f6a62b" stroke="#ffd98d" />
        <path d="M3 6l14-2 2 15-14 2z" fill="#fff8e3" />
        <path d="M6 9h7M6 12h6M7 15h8" stroke="#9a6a30" />
        <path d="M21 2l-8 12-1 4 3-3 7-11z" fill="#9c3417" />
      </>
    ),
  },
  {
    label: "帮助",
    width: "w-[38px]",
    open: true,
    icon: (
      <>
        <path d="M2 9h9v13H2z" fill="#f0f0f0" stroke="#999" />
        <path d="M4 12h5M4 15h5M4 18h5" stroke="#777" />
        <path d="M9 7c0-7 11-6 10-1-1 3-4 3-4 6M15 14v3" fill="none" stroke="#f5e400" strokeWidth="3.500" />
      </>
    ),
  },
];

function TaskButton({ label, width, open, current, icon }: Task) {
  return (
    <button aria-label={label} className={clsx("flex h-full shrink-0 flex-col items-center", width, current && "bg-[#373f41]")}>
      <span className="flex flex-1 items-center">
        <svg width="24" height="24" viewBox="0 0 24 24">{icon}</svg>
      </span>
      <span className={clsx("-mt-[2px] h-[2px]", open && "bg-[#76b9ed]", current ? "w-full" : "w-8")} />
    </button>
  );
}

function Taskbar() {
  return (
    <div className="flex h-10 shrink-0 items-center overflow-hidden bg-[#000b0e] text-white">
      <button aria-label="开始" className="flex h-full w-12 items-center justify-center bg-black">
        <svg width="16" height="16" viewBox="0 0 16 16"><path d="M0 2.300L6.500 1.400v6.100H0zM7.500 1.200L16 0v7.500H7.500zM0 8.500h6.500v6.100L0 13.700zM7.500 8.500H16V16l-8.500-1.200z" fill="#fff" /></svg>
      </button>
      <label className="flex h-full w-[344px] shrink-0 items-center bg-[#333] pl-[9px]">
        <svg width="22" height="22" viewBox="0 0 22 22"><circle cx="11" cy="11" r="9" fill="none" stroke="#f2f2f2" strokeWidth="2.800" /></svg>
        <input aria-label="搜索" placeholder="在这里输入你要搜索的内容" className="ml-[5px] w-0 flex-1 text-[14px] outline-none placeholder:text-[#9a9a9a]" />
        <svg width="12" height="18" viewBox="0 0 12 18" className="mr-[15px]"><path d="M3.500 1h5v10h-5zM1 9v4h10V9M6 13v4M3 16.500h6" fill="none" stroke="#a8a8a8" /></svg>
      </label>
      {pinned.map((t) => <TaskButton key={t.label} {...t} />)}
      <span className="mr-[13px] ml-1 h-4 w-[4px] border-x border-[#333d40]" />
      {running.map((t) => <TaskButton key={t.label} {...t} />)}
      <span className="ml-[17px] h-4 w-[4px] border-x border-[#333d40]" />
      <span className="ml-[10px]">链接</span>
      <div className="ml-auto flex items-center">
        <button aria-label="显示隐藏的图标" className="mr-[35px]"><svg width="14" height="8" viewBox="0 0 14 8"><path d="M1 7l6-6 6 6" fill="none" stroke="#fff" strokeWidth="1.4" /></svg></button>
        <div className="flex items-center gap-[9px]">
          <svg width="14" height="16" viewBox="0 0 14 16"><path d="M7 1c-4 0-4 4-4.500 7L0 12h14l-2.500-4C11 5 11 1 7 1zM5 13h4v1H5z" fill="#fff" /></svg>
          <svg width="16" height="14" viewBox="0 0 16 14"><path d="M5.500 4.500h9v7h-9zM2.500 1v3M1 3.500h4v3H3V11h2" fill="none" stroke="#fff" /><path d="M7 6h5v4H7z" fill="#fff" /></svg>
          <svg width="15" height="14" viewBox="0 0 15 14"><path d="M2 13A12 12 0 0 1 13 1.500M5 13a9 9 0 0 1 8-8M8 13c0-3 2-5 5-5" fill="none" stroke="#e8e8e8" strokeWidth="1.2" /><circle cx="12" cy="12" r="1.500" fill="#fff" /></svg>
          <svg width="16" height="14" viewBox="0 0 16 14"><path d="M1 5h2l3-3v10L3 9H1zM8 5c1 1 1 3 0 4M10.500 3c2 2 2 6 0 8M13 1c3 3 3 9 0 12" fill="none" stroke="#fff" /></svg>
          <svg width="24" height="14" viewBox="0 0 24 14"><rect x=".5" y=".5" width="22" height="12" fill="none" stroke="#fff" /><path d="M3 4h17M3 6.500h17" stroke="#fff" strokeDasharray="2 1" /><path d="M6 9.500h11" stroke="#fff" /></svg>
          <span className="w-[14px]">中</span>
        </div>
        <svg width="16" height="16" viewBox="0 0 16 16" className="mr-[19px] ml-[12px]"><path d="M1 2l13-2 2 13-13 3z" fill="#f04e1d" /><path d="M12 4C8 3 5 4 5 6s7 1 7 4-4 3-8 2" fill="none" stroke="#fff" strokeWidth="2" /></svg>
        <div className="w-[52px] text-center leading-[19px] whitespace-nowrap">
          <div>13:14</div>
          <div>2018/8/2</div>
        </div>
        <button aria-label="通知中心" className="mr-[11px] ml-[21px]">
          <svg width="26" height="26" viewBox="0 0 26 26"><path d="M2 3h16v12H9l-3 3v-3H2z" fill="#fff" /><path d="M5 6h10M5 9h10M5 12h7" stroke="#111" /><circle cx="17" cy="18" r="7.500" fill="#2b2f30" stroke="#8d9496" /><text x="17" y="22" fontSize="12" fontWeight="700" fill="#fff" textAnchor="middle">1</text></svg>
        </button>
        <span className="mr-1 h-10 w-px bg-[#555]" />
      </div>
    </div>
  );
}

export default function App() {
  return (
    <div className="flex h-screen flex-col overflow-hidden bg-[#f0f0f0] font-['Open_Sans','Noto_Sans_CJK_SC',sans-serif] text-[12px] leading-4 text-black">
      <TitleBar />
      <MenuRow />
      <MainToolbar />
      <div className="flex min-h-0 flex-1">
        <Navigator />
        <span className="w-1 shrink-0" />
        <Workspace />
        <span className="w-[3px] shrink-0" />
        <PropertyEditor />
      </div>
      <StatusBar />
      <Taskbar />
    </div>
  );
}
